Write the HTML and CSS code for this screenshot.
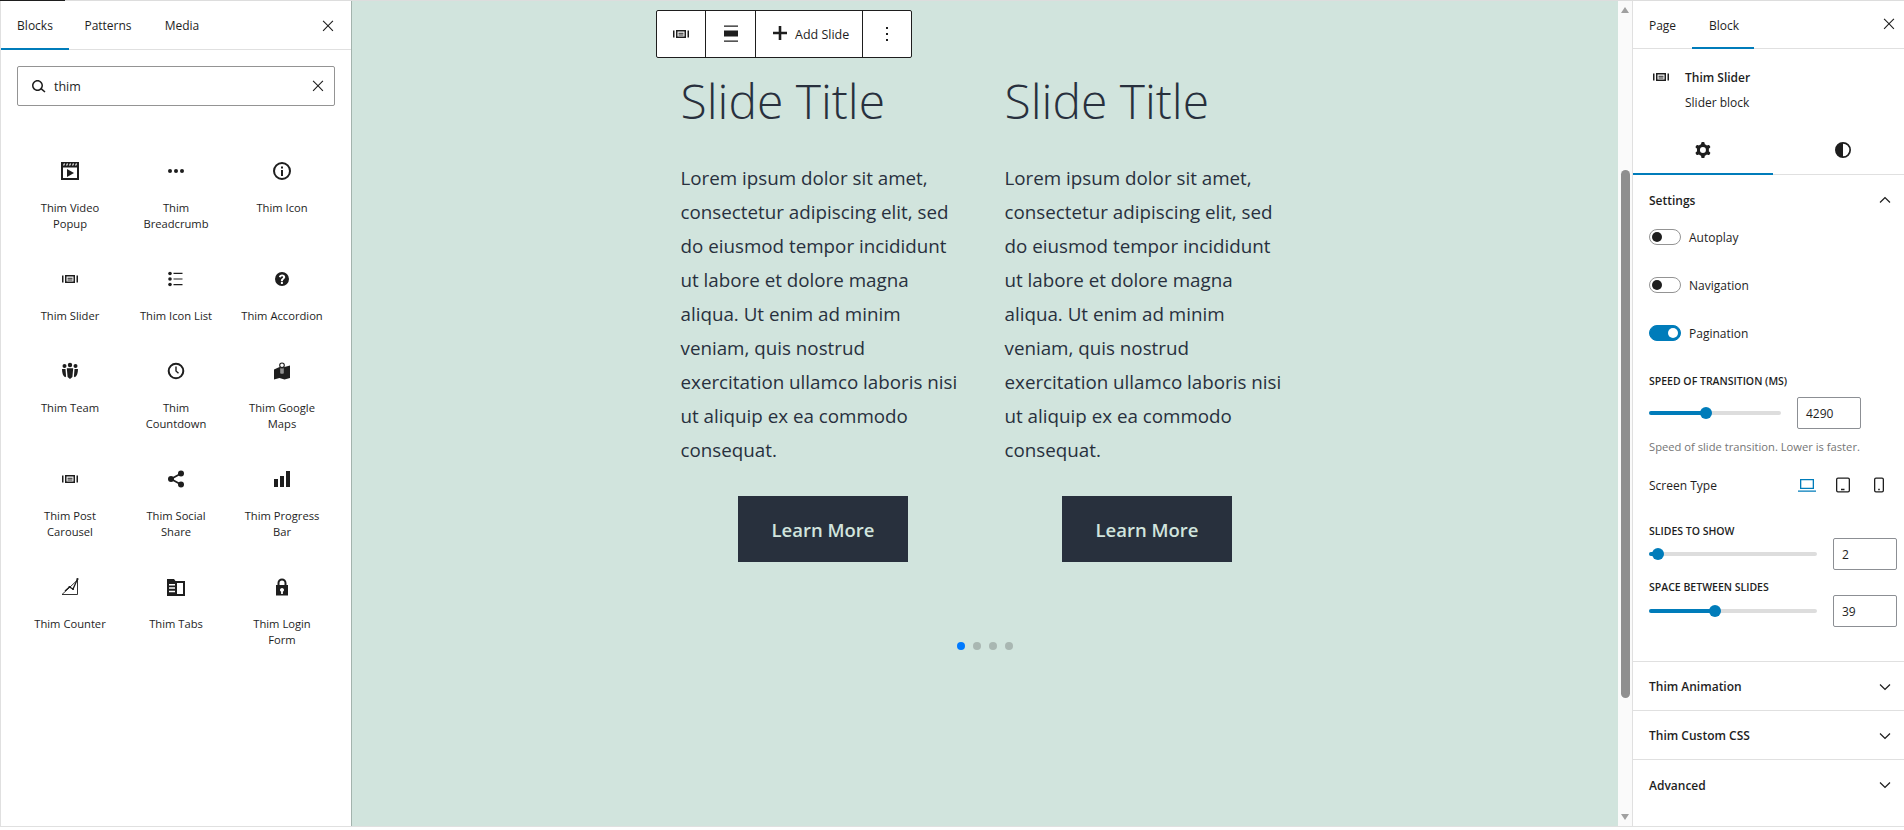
FILE: index.html
```html
<!DOCTYPE html>
<html lang="en">
<head>
<meta charset="utf-8">
<title>Thim Slider</title>
<link rel="stylesheet" href="styles.css">
</head>
<body>
<svg class="defs" width="0" height="0" aria-hidden="true">
  <symbol id="i-slider" viewBox="0 0 24 24"><path d="M4 8.500h1.500v7H4zM18.500 8.500H20v7h-1.500zM7 8h10v8H7zm1.500 1.500v5h7v-5zM9.500 10.800h5v.9h-5zM9.500 12.500h5v.9h-5z" fill-rule="evenodd"/></symbol>
  <symbol id="i-close" viewBox="0 0 24 24"><path d="M13 11.800l6.100-6.300-1.100-1-6 6.200-6-6.200-1.100 1 6.100 6.300-6.100 6.200 1.100 1 6-6.200 6 6.200 1.100-1z"/></symbol>
  <symbol id="i-up" viewBox="0 0 24 24"><path d="M6.500 15.500l5.500-5.200 5.500 5.200 1-1.100-6.500-6.200-6.500 6.200z"/></symbol>
  <symbol id="i-down" viewBox="0 0 24 24"><path d="M17.500 8.500L12 13.700 6.500 8.500l-1 1.100 6.500 6.200 6.500-6.200z"/></symbol>
</svg>
<div class="app">
  <div class="main">
    <aside class="inserter">
      <div class="tabs inserter-tabs">
        <span class="tab tab-active tab-blocks">Blocks</span>
        <span class="tab tab-patterns">Patterns</span>
        <span class="tab tab-media">Media</span>
        <svg class="close" viewBox="0 0 24 24"><use href="#i-close"/></svg>
      </div>
      <div class="search">
        <svg class="search-icon" viewBox="0 0 24 24"><path d="M13.500 6C10.500 6 8 8.500 8 11.500c0 1.100.3 2.100.9 3l-3.400 3 1 1.100 3.400-2.900c1 .9 2.200 1.400 3.600 1.400 3 0 5.500-2.500 5.500-5.500C19 8.500 16.500 6 13.500 6zm0 9.500c-2.200 0-4-1.800-4-4s1.800-4 4-4 4 1.800 4 4-1.800 4-4 4z" transform="matrix(-1 0 0 1 25 0)"/></svg>
        <span class="search-text">thim</span>
        <svg class="search-clear" viewBox="0 0 24 24"><use href="#i-close"/></svg>
      </div>
      <div class="block-grid">
        <div class="block-item">
          <svg class="block-icon" viewBox="0 0 24 24"><path fill-rule="evenodd" d="M3 3h18v18H3zm2 5.500V19h14V8.500zM5.800 4.500l-.8 2h1.300l.8-2zm3 0l-.8 2h1.300l.8-2zm3 0l-.8 2h1.300l.8-2zm3 0l-.8 2h1.300l.8-2zm3 0l-.8 2h1.300l.8-2z"/><path d="M9 10l7 4-7 4z"/></svg>
          <span class="block-label">Thim Video Popup</span>
        </div>
        <div class="block-item">
          <svg class="block-icon" viewBox="0 0 24 24"><circle cx="6" cy="12" r="2"/><circle cx="12" cy="12" r="2"/><circle cx="18" cy="12" r="2"/></svg>
          <span class="block-label">Thim Breadcrumb</span>
        </div>
        <div class="block-item">
          <svg class="block-icon" viewBox="0 0 24 24"><circle cx="12" cy="12" r="8" fill="none" stroke="#1e1e1e" stroke-width="2"/><path d="M11 11h2v6h-2zM11 7.500h2v2h-2z"/></svg>
          <span class="block-label">Thim Icon</span>
        </div>
        <div class="block-item">
          <svg class="block-icon" viewBox="0 0 24 24"><use href="#i-slider"/></svg>
          <span class="block-label">Thim Slider</span>
        </div>
        <div class="block-item">
          <svg class="block-icon" viewBox="0 0 24 24"><circle cx="6" cy="6.500" r="1.800"/><circle cx="6" cy="12" r="1.800"/><circle cx="6" cy="17.500" r="1.800"/><path d="M9.500 5.800h9v1.200h-9zM9.500 11.400h9v1.200h-9zM9.500 17h9v1.200h-9z"/></svg>
          <span class="block-label">Thim Icon List</span>
        </div>
        <div class="block-item">
          <svg class="block-icon" viewBox="0 0 24 24"><path fill-rule="evenodd" d="M12 5a7 7 0 1 1 0 14 7 7 0 0 1 0-14zm-1.100 9.200h2v-.5c0-.7.400-1 1-1.500.7-.5 1.300-1.100 1.300-2.200 0-1.600-1.300-2.600-3.100-2.600-1.700 0-3 .9-3.200 2.700l2 .3c.1-.8.500-1.200 1.200-1.200.6 0 1 .3 1 .9 0 .5-.3.800-.8 1.200-.8.600-1.400 1.100-1.400 2.200zm0 .8v1.900h2V15z"/></svg>
          <span class="block-label">Thim Accordion</span>
        </div>
        <div class="block-item">
          <svg class="block-icon" viewBox="0 0 24 24"><circle cx="12" cy="6" r="2.200"/><circle cx="6.500" cy="7" r="2"/><circle cx="17.500" cy="7" r="2"/><path d="M8.800 9.200h6.400l-.8 8.800-2.400 2-2.400-2zM4 10h3.500l.6 7.500-1 .8C5 17 4 14 4 10zM20 10h-3.500l-.6 7.500 1 .8c2.100-1.300 3.100-4.300 3.100-8.300z"/></svg>
          <span class="block-label">Thim Team</span>
        </div>
        <div class="block-item">
          <svg class="block-icon" viewBox="0 0 24 24"><circle cx="12" cy="12" r="7.300" fill="none" stroke="#1e1e1e" stroke-width="2"/><path d="M11.300 7.500h1.400v4.200l2.300 2.100-1 1-2.700-2.500z"/></svg>
          <span class="block-label">Thim Countdown</span>
        </div>
        <div class="block-item">
          <svg class="block-icon" viewBox="0 0 24 24"><path d="M4 10.500l5.500-2.500 2.500 1 2.500-1 5.500-1.500V19l-5.500 1.500-5-1.500L4 20.500z"/><path d="M12 14.500V9.300" fill="none" stroke="#fff" stroke-width="2.800"/><path d="M12 14.500V8.800" fill="none" stroke="#1e1e1e" stroke-width="1"/><circle cx="12" cy="6.300" r="2.300" fill="#fff" stroke="#1e1e1e" stroke-width="1.100"/></svg>
          <span class="block-label">Thim Google Maps</span>
        </div>
        <div class="block-item">
          <svg class="block-icon" viewBox="0 0 24 24"><use href="#i-slider"/></svg>
          <span class="block-label">Thim Post Carousel</span>
        </div>
        <div class="block-item">
          <svg class="block-icon" viewBox="0 0 24 24"><circle cx="17" cy="6.500" r="3"/><circle cx="7" cy="12" r="3"/><circle cx="17" cy="17.500" r="3"/><path d="M7 12l10-5.500M7 12l10 5.500" stroke="#1e1e1e" stroke-width="1.800" fill="none"/></svg>
          <span class="block-label">Thim Social Share</span>
        </div>
        <div class="block-item">
          <svg class="block-icon" viewBox="0 0 24 24"><path d="M4 12h4v8H4zM10 9h4v11h-4zM16 4h4v16h-4z"/></svg>
          <span class="block-label">Thim Progress Bar</span>
        </div>
        <div class="block-item">
          <svg class="block-icon" viewBox="0 0 24 24"><path d="M4 19.500h15.500V5M4 19.500L19.500 5" fill="none" stroke="#1e1e1e" stroke-width=".9"/><path d="M7 16l4.500-4 3.500 2 4.500-10" fill="none" stroke="#1e1e1e" stroke-width="1.300"/><circle cx="11.500" cy="12" r="1.100"/><circle cx="15" cy="14" r="1.100"/><circle cx="19.500" cy="4" r="1.100"/></svg>
          <span class="block-label">Thim Counter</span>
        </div>
        <div class="block-item">
          <svg class="block-icon" viewBox="0 0 24 24"><path fill-rule="evenodd" d="M3 4h7l1.500 2H21v15H3zm10 4v11h6V8zM5 9v1.500h6V9zm0 3.300v1.500h6v-1.500zm0 3.400v1.500h6v-1.500z"/></svg>
          <span class="block-label">Thim Tabs</span>
        </div>
        <div class="block-item">
          <svg class="block-icon" viewBox="0 0 24 24"><path fill-rule="evenodd" d="M6 10h1.500V8a4.500 4.500 0 0 1 9 0v2H18v10.500H6zm3.500 0h5V8a2.500 2.500 0 0 0-5 0zM12 13a2 2 0 0 0-.9 3.800V19h1.800v-2.200A2 2 0 0 0 12 13z"/></svg>
          <span class="block-label">Thim Login Form</span>
        </div>
      </div>
    </aside>

    <section class="canvas">
      <div class="toolbar">
        <span class="tool tool-one"><svg class="tool-svg" viewBox="0 0 24 24"><use href="#i-slider"/></svg></span>
        <span class="tool tool-two"><svg class="tool-svg" viewBox="0 0 24 24"><path d="M5 3.500h14v1.200H5zM5 8.500h14v6H5zM5 18.500h14v1.200H5z"/></svg></span>
        <span class="tool tool-add"><svg class="tool-svg tool-plus" viewBox="0 0 24 24"><path d="M10.700 5h2.600v5.700H19v2.600h-5.700V19h-2.600v-5.700H5v-2.600h5.700z"/></svg><span class="tool-text">Add Slide</span></span>
        <span class="tool tool-more"><svg class="tool-svg" viewBox="0 0 24 24"><path d="M11 5h2v2h-2zM11 11h2v2h-2zM11 17h2v2h-2z"/></svg></span>
      </div>
      <div class="slider">
        <div class="slides">
          <article class="slide">
            <h2 class="slide-title">Slide Title</h2>
            <p class="slide-text">Lorem ipsum dolor sit amet, consectetur adipiscing elit, sed do eiusmod tempor incididunt ut labore et dolore magna aliqua. Ut enim ad minim veniam, quis nostrud exercitation ullamco laboris nisi ut aliquip ex ea commodo consequat.</p>
            <span class="slide-btn">Learn More</span>
          </article>
          <article class="slide">
            <h2 class="slide-title">Slide Title</h2>
            <p class="slide-text">Lorem ipsum dolor sit amet, consectetur adipiscing elit, sed do eiusmod tempor incididunt ut labore et dolore magna aliqua. Ut enim ad minim veniam, quis nostrud exercitation ullamco laboris nisi ut aliquip ex ea commodo consequat.</p>
            <span class="slide-btn">Learn More</span>
          </article>
        </div>
        <div class="dots">
          <span class="dot dot-active"></span><span class="dot"></span><span class="dot"></span><span class="dot"></span>
        </div>
      </div>
    </section>

    <div class="scrollbar">
      <span class="arrow-up"></span>
      <span class="thumb"></span>
      <span class="arrow-down"></span>
    </div>

    <aside class="sidebar">
      <div class="tabs side-tabs">
        <span class="tab tab-page">Page</span>
        <span class="tab tab-active tab-block">Block</span>
        <svg class="close side-close" viewBox="0 0 24 24"><use href="#i-close"/></svg>
      </div>
      <div class="card">
        <svg class="card-icon" viewBox="0 0 24 24"><use href="#i-slider"/></svg>
        <div class="card-body">
          <div class="card-title">Thim Slider</div>
          <div class="card-desc">Slider block</div>
        </div>
      </div>
      <div class="mode-tabs">
        <span class="mode mode-active"><svg class="mode-svg" viewBox="0 0 24 24"><path fill-rule="evenodd" d="M10.289 4.836A1 1 0 0111.275 4h1.306a1 1 0 01.987.836l.244 1.466c.787.26 1.503.679 2.108 1.218l1.393-.522a1 1 0 011.216.437l.653 1.130a1 1 0 01-.23 1.273l-1.148.944a6.025 6.025 0 010 2.435l1.149.946a1 1 0 01.23 1.272l-.653 1.130a1 1 0 01-1.216.437l-1.394-.522c-.605.54-1.320.958-2.108 1.218l-.244 1.466a1 1 0 01-.987.836h-1.306a1 1 0 01-.986-.836l-.244-1.466a5.995 5.995 0 01-2.108-1.218l-1.394.522a1 1 0 01-1.217-.436l-.653-1.131a1 1 0 01.23-1.272l1.149-.946a6.026 6.026 0 010-2.435l-1.148-.944a1 1 0 01-.23-1.272l.653-1.131a1 1 0 011.217-.437l1.393.522a5.994 5.994 0 012.108-1.218l.244-1.466zM14.929 12a3 3 0 11-6 0 3 3 0 016 0z"/></svg></span>
        <span class="mode"><svg class="mode-svg" viewBox="0 0 24 24"><path fill-rule="evenodd" d="M12 4a8 8 0 1 1 0 16 8 8 0 0 1 0-16zm0 1.700v12.600a6.300 6.300 0 0 0 0-12.600z"/></svg></span>
      </div>
      <div class="panel-open">
        <div class="panel-head"><span class="panel-title">Settings</span><svg class="chev" viewBox="0 0 24 24"><use href="#i-up"/></svg></div>
        <div class="toggle-row toggle-first"><span class="toggle"><span class="knob"></span></span><span class="toggle-label">Autoplay</span></div>
        <div class="toggle-row"><span class="toggle"><span class="knob"></span></span><span class="toggle-label">Navigation</span></div>
        <div class="toggle-row"><span class="toggle toggle-on"><span class="knob"></span></span><span class="toggle-label">Pagination</span></div>

        <div class="field-label">Speed of transition (ms)</div>
        <div class="range-row range-speed">
          <div class="range"><span class="range-fill" style="width:57px"></span><span class="range-thumb" style="left:57px"></span></div>
          <span class="num">4290</span>
        </div>
        <div class="help">Speed of slide transition. Lower is faster.</div>
        <div class="screen-row">
          <span class="screen-label">Screen Type</span>
          <svg class="screen-icon screen-laptop" viewBox="0 0 24 24"><path fill-rule="evenodd" d="M5 6h14v10H5zm1.300 1.300v7.400h11.400V7.300zM3 17.500h18v1.200H3z"/></svg>
          <svg class="screen-icon" viewBox="0 0 24 24"><path fill-rule="evenodd" d="M7 4.500h10a2 2 0 0 1 2 2v11a2 2 0 0 1-2 2H7a2 2 0 0 1-2-2v-11a2 2 0 0 1 2-2zm0 1.300a.7.700 0 0 0-.7.700v11c0 .4.300.7.700.7h10a.7.700 0 0 0 .7-.7v-11a.7.700 0 0 0-.7-.7zM10 15.800h3.500v1.500H10z"/></svg>
          <svg class="screen-icon" viewBox="0 0 24 24"><path fill-rule="evenodd" d="M9 4.500h6a2 2 0 0 1 2 2v11a2 2 0 0 1-2 2H9a2 2 0 0 1-2-2v-11a2 2 0 0 1 2-2zm0 1.300a.7.700 0 0 0-.7.700v11c0 .4.300.7.700.7h6a.7.700 0 0 0 .7-.7v-11a.7.700 0 0 0-.7-.7zM11.200 15.800h1.600v1.500h-1.600z"/></svg>
        </div>
        <div class="field-label field-slides">Slides to show</div>
        <div class="range-row range-wide">
          <div class="range"><span class="range-fill" style="width:9px"></span><span class="range-thumb" style="left:9px"></span></div>
          <span class="num">2</span>
        </div>
        <div class="field-label field-space">Space between slides</div>
        <div class="range-row range-wide">
          <div class="range"><span class="range-fill" style="width:66px"></span><span class="range-thumb" style="left:66px"></span></div>
          <span class="num">39</span>
        </div>
      </div>
      <div class="panel-closed"><span class="panel-title">Thim Animation</span><svg class="chev" viewBox="0 0 24 24"><use href="#i-down"/></svg></div>
      <div class="panel-closed"><span class="panel-title">Thim Custom CSS</span><svg class="chev" viewBox="0 0 24 24"><use href="#i-down"/></svg></div>
      <div class="panel-closed panel-last"><span class="panel-title">Advanced</span><svg class="chev" viewBox="0 0 24 24"><use href="#i-down"/></svg></div>
    </aside>
  </div>
</div>
</body>
</html>
```
FILE: styles.css
```css
* { box-sizing: border-box; }
html, body { margin: 0; height: 100%; overflow: hidden; background: #fff; }
body { font-family: "Open Sans", "Noto Sans", sans-serif; font-size: 12px; color: #1e1e1e; }
svg { fill: #1e1e1e; display: block; flex: none; }
.defs { position: absolute; }

.app { position: relative; height: 830px; border-top: 1px solid #ddd; padding-bottom: 3px; }
.app::before { content: ""; position: absolute; left: 0; top: -1px; width: 65px; height: 1px; background: #1e1e1e; }
.main { display: flex; height: 826px; border-bottom: 1px solid #e0e0e0; }

/* inserter */
.inserter { width: 352px; flex: none; border-left: 1px solid #e0e0e0; border-right: 1px solid #a3b3ad; }
.tabs { position: relative; display: flex; border-bottom: 1px solid #e0e0e0; }
.inserter-tabs { height: 49px; }
.side-tabs { height: 48px; }
.tab { display: flex; align-items: center; justify-content: center; position: relative; padding-top: 1px; }
.tab-active::after { content: ""; position: absolute; left: 0; right: 0; bottom: -1px; height: 2px; background: #007cba; }
.tab-blocks { width: 68px; }
.tab-patterns { width: 78px; }
.tab-media { width: 70px; }
.close { width: 18px; height: 18px; margin-left: auto; align-self: center; }
.inserter .close { margin-right: 14px; margin-top: 1px; }
.search { display: flex; align-items: center; height: 40px; margin: 16px 16px 0 16px; border: 1px solid #949494; border-radius: 2px; padding: 0 7px 0 8px; font-size: 12.500px; }
.search-icon { width: 24px; height: 24px; }
.search-text { margin-left: 4px; }
.search-clear { width: 18px; height: 18px; margin-left: auto; }
.block-grid { display: grid; grid-template-columns: repeat(3, 106px); row-gap: 27px; padding: 45px 0 0 16px; align-items: start; }
.block-item { display: flex; flex-direction: column; align-items: center; padding-top: 8px; }
.block-icon { width: 24px; height: 24px; }
.block-label { display: block; width: 85px; margin-top: 17px; line-height: 16px; font-size: 11.200px; text-align: center; }

/* canvas */
.canvas { position: relative; flex: 1; background: #d1e4dd; min-width: 0; }
.toolbar { position: absolute; top: 9px; left: 304px; display: flex; height: 48px; background: #fff; border: 1px solid #1e1e1e; border-radius: 2px; }
.tool { display: flex; align-items: center; justify-content: center; border-right: 1px solid #1e1e1e; }
.tool-one { width: 49px; }
.tool-two { width: 50px; }
.tool-add { width: 107px; justify-content: flex-start; padding-left: 12px; gap: 3px; }
.tool-more { width: 48px; border-right: 0; }
.tool-svg { width: 24px; height: 24px; }
.tool-plus { margin-top: -3px; }
.tool-text { font-size: 12.500px; }
.slider { width: 609px; margin: 0 auto; padding-top: 70px; }
.slides { display: flex; gap: 39px; }
.slide { width: 285px; flex: none; color: #28303d; display: flex; flex-direction: column; }
.slide-title { margin: 0; font-size: 48px; line-height: 60px; font-weight: 300; }
.slide-text { margin: 30px 0 0; font-size: 18.800px; line-height: 34px; font-weight: 400; }
.slide-btn { align-self: center; display: flex; align-items: center; justify-content: center; width: 170px; height: 66px; margin-top: 29px; background: #28303d; color: #d1e4dd; font-size: 18.500px; font-weight: 600; }
.dots { display: flex; justify-content: center; gap: 8px; margin-top: 80px; }
.dot { width: 8px; height: 8px; border-radius: 50%; background: #a9b7b2; }
.dot-active { background: #007aff; }

/* scrollbar */
.scrollbar { position: relative; width: 14px; flex: none; background: #fafafa; }
.thumb { position: absolute; left: 3px; top: 169px; width: 9px; height: 528px; border-radius: 5px; background: #8f8f8f; }
.arrow-up, .arrow-down { position: absolute; left: 3px; border-left: 4.500px solid transparent; border-right: 4.500px solid transparent; }
.arrow-up { top: 6px; border-bottom: 6px solid #a0a0a0; }
.arrow-down { bottom: 6px; border-top: 6px solid #a0a0a0; }

/* sidebar */
.sidebar { width: 272px; flex: none; border-left: 1px solid #e0e0e0; }
.tab-page { width: 59px; }
.tab-block { width: 62px; padding-left: 2px; }
.side-close { margin-right: 6px; margin-top: -1px; }
.card { display: flex; height: 75px; padding: 20px 16px 0 16px; }
.card-icon { width: 24px; height: 24px; margin-top: -4px; margin-right: 12px; }
.card-title { font-weight: 600; line-height: 16px; margin-top: 1px; }
.card-desc { line-height: 16px; margin-top: 9px; }
.mode-tabs { display: flex; height: 51px; padding-top: 2px; border-bottom: 1px solid #e0e0e0; }
.mode { position: relative; flex: none; width: 140px; display: flex; align-items: center; justify-content: center; }
.mode-active::after { content: ""; position: absolute; left: 0; right: 0; bottom: -1px; height: 2px; background: #007cba; }
.mode-svg { width: 24px; height: 24px; }
.panel-open { height: 487px; padding: 0 7px 0 16px; border-bottom: 1px solid #e0e0e0; }
.panel-head { display: flex; align-items: center; justify-content: space-between; height: 50px; }
.panel-title { font-weight: 600; }
.chev { width: 20px; height: 20px; margin-right: 2px; }
.toggle-row { display: flex; align-items: center; gap: 8px; height: 16px; margin-bottom: 32px; }
.toggle-first { margin-top: 4px; }
.toggle { position: relative; width: 32px; height: 16px; border: 1px solid #949494; border-radius: 8px; background: #fff; }
.knob { position: absolute; left: 2px; top: 2px; width: 10px; height: 10px; border-radius: 50%; background: #1e1e1e; }
.toggle-on { background: #007cba; border-color: #007cba; }
.toggle-on .knob { left: auto; right: 2px; background: #fff; }
.field-label { font-size: 10.500px; line-height: 16px; font-weight: 600; text-transform: uppercase; }
.range-row { display: flex; align-items: center; }
.range { position: relative; height: 4px; border-radius: 2px; background: #ddd; }
.range-fill { position: absolute; left: 0; top: 0; height: 4px; border-radius: 2px; background: #007cba; }
.range-thumb { position: absolute; top: -4px; width: 12px; height: 12px; margin-left: -6px; border-radius: 50%; background: #007cba; }
.range-speed { margin-top: 8px; }
.range-speed .range { width: 132px; margin-right: 16px; }
.range-wide .range { width: 168px; margin-right: 16px; }
.num { display: flex; align-items: center; width: 64px; height: 32px; padding-left: 8px; border: 1px solid #8c8f94; border-radius: 2px; background: #fff; font-size: 12px; }
.help { margin-top: 10px; font-size: 11.200px; line-height: 16px; color: #757575; }
.screen-row { display: flex; align-items: center; height: 24px; margin-top: 18px; }
.screen-label { margin-right: auto; }
.screen-icon { width: 24px; height: 24px; margin-left: 12px; }
.screen-icon:last-child { margin-right: 6px; }
.screen-laptop { fill: #007cba; }
.field-slides { margin-top: 27px; line-height: 14px; }
.field-space { margin-top: 9px; }
.panel-closed { display: flex; align-items: center; justify-content: space-between; height: 49px; padding: 1px 7px 0 16px; border-bottom: 1px solid #e0e0e0; }
.panel-last { border-bottom: 0; }
```
